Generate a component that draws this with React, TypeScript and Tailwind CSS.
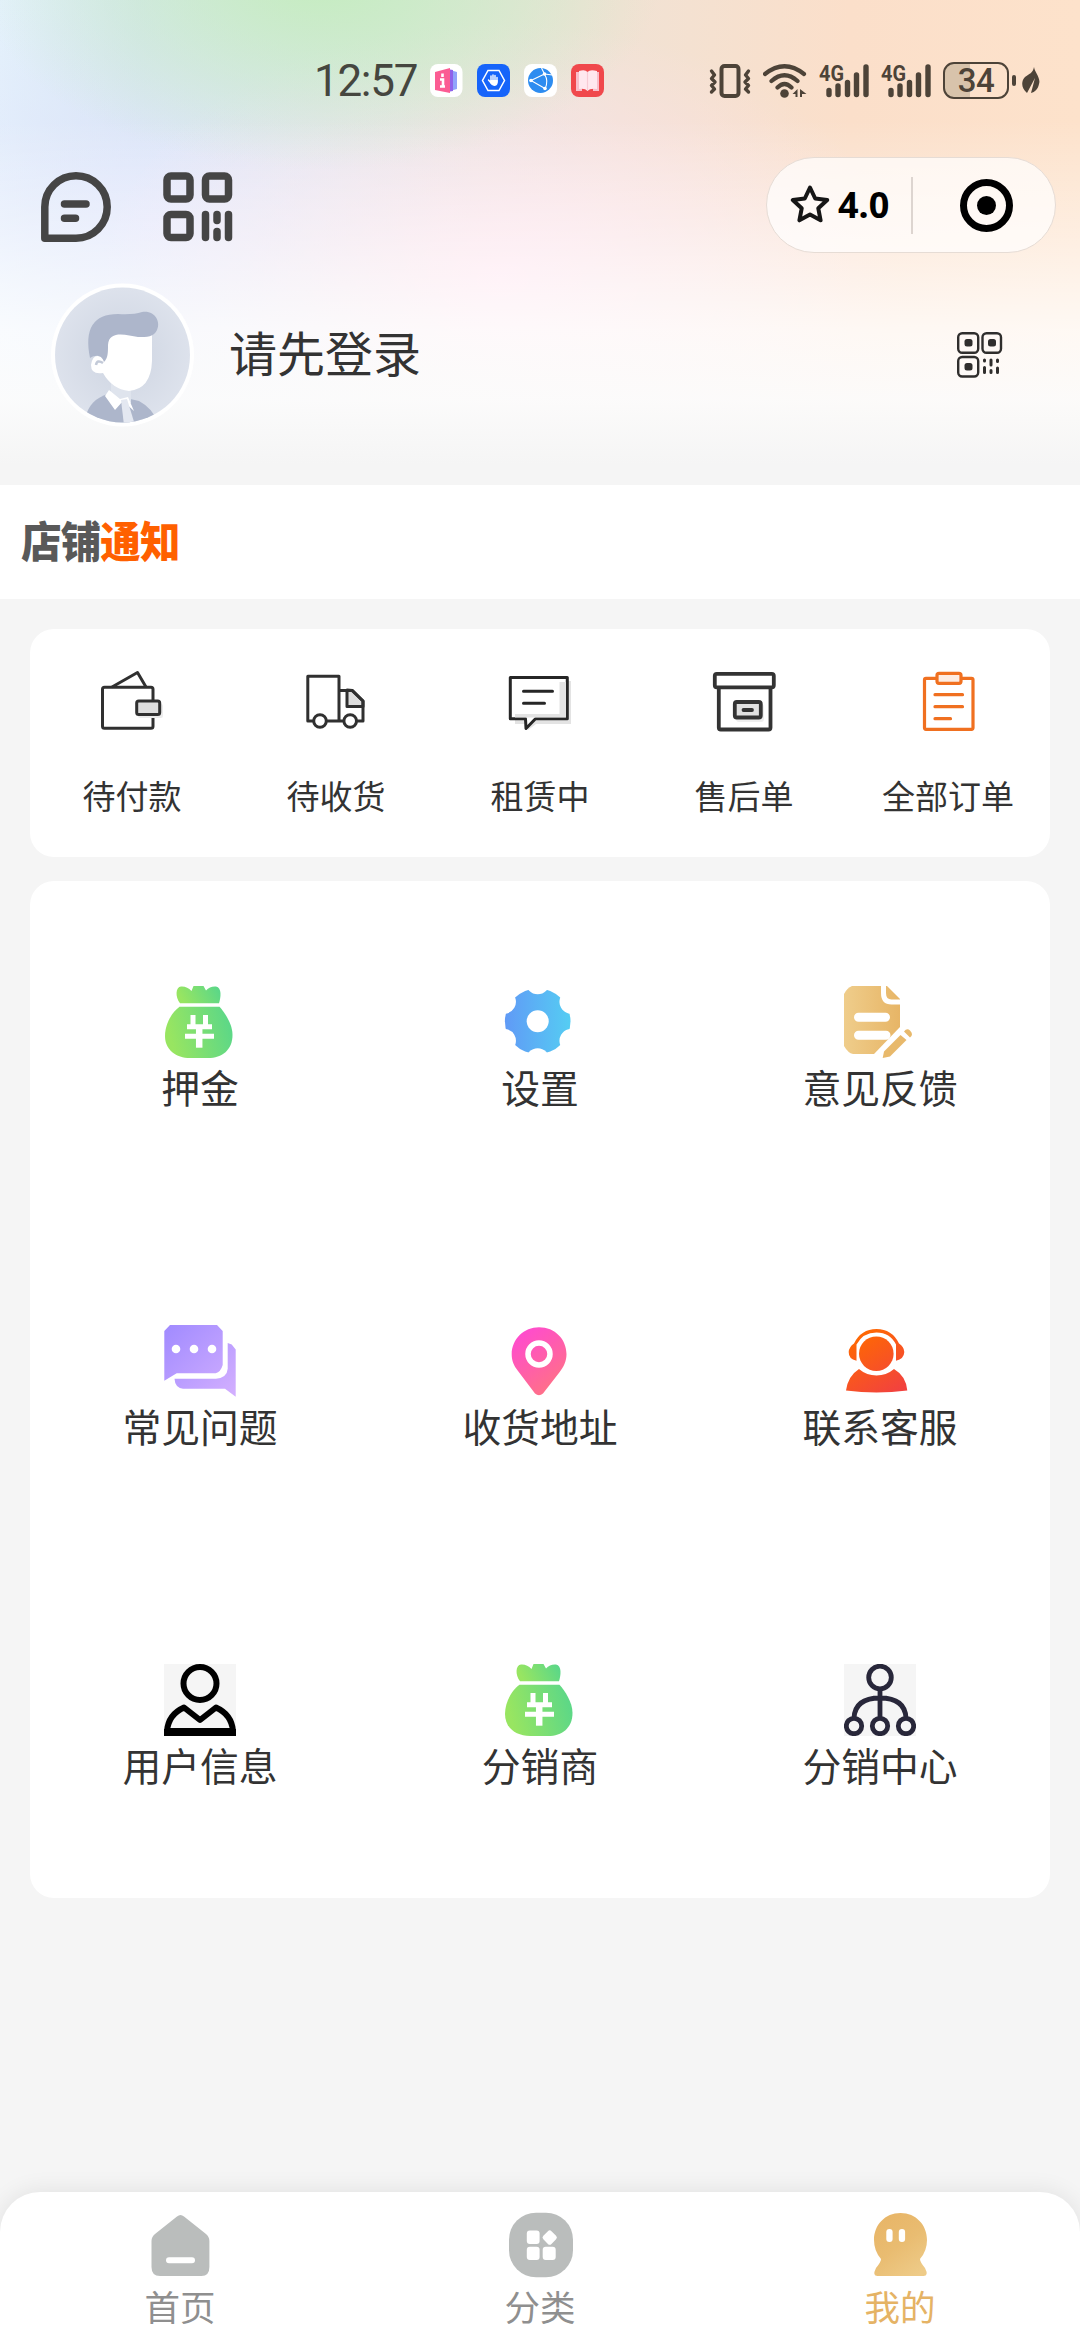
import React from 'react';

type IconProps = { className?: string };

type MenuItem = {
    label: string;
    icon: React.ReactNode;
};

// Shared gradients, referenced by the icons below
const Gradients: React.FC = () => (
    <svg className="absolute size-0" aria-hidden="true">
        <defs>
            <linearGradient id="green" x1="0" y1="0.2" x2="1" y2="0">
                <stop offset="0" stopColor="#98e561" />
                <stop offset="1" stopColor="#56d68b" />
            </linearGradient>
            <linearGradient id="blue">
                <stop offset="0" stopColor="#609af6" />
                <stop offset="1" stopColor="#55cdf3" />
            </linearGradient>
            <linearGradient id="gold">
                <stop offset="0" stopColor="#efcd8b" />
                <stop offset="1" stopColor="#e7b566" />
            </linearGradient>
            <linearGradient id="purple" gradientUnits="userSpaceOnUse" x1="0" y1="0" x2="72" y2="72">
                <stop offset="0" stopColor="#a08aff" />
                <stop offset="1" stopColor="#d4b0ff" />
            </linearGradient>
            <linearGradient id="pink" x1="0.1" y1="0" x2="0.7" y2="1">
                <stop offset="0" stopColor="#ff48d5" />
                <stop offset="1" stopColor="#ff7284" />
            </linearGradient>
            <linearGradient id="orange" gradientUnits="userSpaceOnUse" x1="12" y1="8" x2="50" y2="68">
                <stop offset="0" stopColor="#ff6a00" />
                <stop offset="1" stopColor="#f2423e" />
            </linearGradient>
            <linearGradient id="mine" x1="0.2" y1="0" x2="0.8" y2="1">
                <stop offset="0" stopColor="#e8b567" />
                <stop offset="0.5" stopColor="#e9bc71" />
                <stop offset="1" stopColor="#eecb88" />
            </linearGradient>
            <radialGradient id="avatar">
                <stop offset="0" stopColor="#cdd4e1" />
                <stop offset="1" stopColor="#dde2ec" />
            </radialGradient>
            <clipPath id="avatarClip">
                <circle cx="71.5" cy="72" r="67.5" />
            </clipPath>
        </defs>
    </svg>
);

const VibrateIcon = () => (
    <svg width="42" height="34" viewBox="0 0 42 34" fill="none" stroke="#4d4338" strokeLinejoin="round" strokeLinecap="round">
        <rect x="12.5" y="2" width="17" height="30" rx="3" strokeWidth="4" />
        <path d="M2.500 7l3 4-3 3.500 3.500 3.500-3.500 3.500 3 3.500-3 3M39.500 7l-3 4 3 3.500-3.500 3.500 3.500 3.500-3 3.500 3 3" strokeWidth="3.400" />
    </svg>
);

const WifiIcon = () => (
    <svg width="44" height="34" viewBox="0 0 44 34" fill="none" stroke="#4d4338" strokeWidth="4.200" strokeLinecap="round">
        <path d="M2 10Q21.500-5.500 41 10M8.500 17Q21.500 5.500 34.500 17M14.500 23.500Q21.500 16.500 28.500 23.500" />
        <circle cx="21.500" cy="29.500" r="4.300" fill="#4d4338" stroke="none" />
        <path d="M34.500 25v8h-2v-3h-3zM37 25l6.500 5H39v3h-2z" fill="#4d4338" stroke="none" />
    </svg>
);

const SignalIcon = () => (
    <svg width="50" height="54" viewBox="0 -10 50 54">
        <text x="0" y="16.500" fontSize="22.500" fontWeight="700" fill="#4d4338" textLength="25" lengthAdjust="spacingAndGlyphs">4G</text>
        <path d="M10 26.500v4M19 22v8.500M28.500 18.500v12M37.500 11v19.500M47 3v27.500" stroke="#4d4338" strokeWidth="5.400" strokeLinecap="round" />
    </svg>
);

const LeafIcon = () => (
    <svg width="18" height="30" viewBox="0 0 18 30" fill="#4d4338">
        <path d="M12 1c1 6 7 11 5 17-1 5-4 8-8 9l4-15L5 27C-1 22-1 15 3 11c4-3 8-4 9-10z" />
    </svg>
);

const Battery = () => (
    <div className="flex items-center">
        <div className="flex h-[37px] w-[66px] items-center justify-center rounded-[11px] border-[2.5px] border-[#4d4338] bg-linear-to-r from-[#d8c3ab] from-40% to-transparent to-40%">
            <span className="text-[33px] leading-none font-medium tracking-[-0.5px] text-[#4d4338]">34</span>
        </div>
        <div className="ml-[3px] h-[11px] w-1 rounded-full bg-[#4d4338]" />
    </div>
);

const AppIcons = () => (
    <div className="flex gap-[14px]">
        <svg width="33" height="33" viewBox="0 0 33 33">
            <rect width="32.500" height="33" rx="8" fill="#fff" />
            <path d="M20 6l7 2v17l-7 2z" fill="#90a4fb" />
            <path d="M17 5l6 1v21l-6 1z" fill="#8f62ea" />
            <path d="M5 8l15-4v25L5 26z" fill="#fb5c93" />
            <path d="M12.500 9.500v3.500M10 15.500h3v7M10 22.500h5" stroke="#fff" strokeWidth="2.600" fill="none" />
        </svg>
        <svg width="33" height="33" viewBox="0 0 33 33">
            <rect width="33" height="33" rx="8" fill="#1664fa" />
            <path d="M11 6.500h11L27.500 16.500 22 26.500H11L5.500 16.500z" fill="none" stroke="#fff" strokeWidth="1.500" />
            <path d="M14 17v-5M16 17v-6M18 17v-5.500M20 18v-4.500M11.500 16l3 3.500" stroke="#fff" strokeWidth="1.400" strokeLinecap="round" />
            <path d="M13.300 16h7.400v3q-.5 3-3.500 3-2.500 0-4-3z" fill="#fff" />
        </svg>
        <svg width="33" height="33" viewBox="0 0 33 33">
            <rect width="33" height="33" rx="8" fill="#fff" />
            <circle cx="16.500" cy="16.500" r="12.500" fill="#2d8cf0" />
            <path d="M7 16.500L20.500 10M7 16.500l14 8M20.500 10c3 5 3 10 .500 15M20.500 10l-3-6M20.500 10l8 1" fill="none" stroke="#fff" strokeWidth="1.100" />
            <circle cx="7" cy="16.500" r="1.800" fill="#fff" />
            <circle cx="20.500" cy="10" r="1.800" fill="#fff" />
            <circle cx="21" cy="24.500" r="1.800" fill="#fff" />
        </svg>
        <svg width="33" height="33" viewBox="0 0 33 33">
            <rect width="33" height="33" rx="8" fill="#f0484c" />
            <path d="M5 8h6v19H5zM22 8h6v19h-6z" fill="#f9bfcb" />
            <path d="M8 7q6-2 8.500 1Q19 5 26 7v18q-7-1-9.500 2-2.500-3-8.500-2z" fill="#ffe8ef" />
            <path d="M16.500 8v18" stroke="#f7cbd5" strokeWidth="1.200" />
        </svg>
    </div>
);

const MessageIcon = ({ className }: IconProps) => (
    <svg className={className} width="70" height="70" viewBox="0 0 70 70" fill="none" stroke="#454545" strokeWidth="7.500" strokeLinecap="round" strokeLinejoin="round">
        <path d="M3.800 66.200V35A31.200 31.200 0 1 1 35 66.200z" />
        <path d="M23.500 32h21.500M23.500 46.300h11" />
    </svg>
);

const ScanIcon = ({ className }: IconProps) => (
    <svg className={className} width="70" height="70" viewBox="0 0 70 70" fill="none" stroke="#454545" strokeWidth="7.500" strokeLinecap="round">
        <rect x="4" y="4" width="23" height="23" rx="4" />
        <rect x="42.500" y="4" width="23" height="23" rx="4" />
        <rect x="4" y="42.500" width="23" height="23" rx="4" />
        <path d="M42.500 42.500v23M65.500 42.500v23M54 42.500v6M54 59.500v6" />
    </svg>
);

const QrIcon = () => (
    <svg width="46" height="46" viewBox="0 0 46 46" fill="none" stroke="#2f2e2d" strokeWidth="2.400" strokeLinecap="round">
        <rect x="1.200" y="1.200" width="20" height="19.500" rx="4" />
        <rect x="25.500" y="1.200" width="18.500" height="19.500" rx="4" />
        <rect x="1.200" y="25" width="20" height="19.500" rx="4" />
        <g fill="#2f2e2d" stroke="none">
            <rect x="7.500" y="7" width="8" height="7.500" rx="2.500" />
            <rect x="31" y="7" width="8" height="7.500" rx="2.500" />
            <rect x="7.500" y="31" width="8" height="7.500" rx="2.500" />
        </g>
        <path d="M27.500 28v1M27.500 35.500v5M34 28v5M34 38.500v2M40.500 28v1.500M40.500 36v4.500" strokeWidth="3" />
    </svg>
);

const Avatar = () => (
    <svg width="143" height="144" viewBox="0 0 143 144">
        <circle cx="71.500" cy="72" r="71.500" fill="#fff" />
        <circle cx="71.500" cy="72" r="67.500" fill="url(#avatar)" />
        <g clipPath="url(#avatarClip)">
            <path d="M34 135q5-19 23-24l18 4 13 3q13 7 18 20v8H34z" fill="#adb6cb" />
            <path d="M60 100h20v20H60z" fill="#dfe4ed" />
            <path d="M58 107l11 9 8-2 6 14-11-10-8 9-10-14z" fill="#fff" />
            <path d="M70 117l6-1 8 26h-11z" fill="#e4e8f1" />
            <path d="M55 50q23-8 46 1v27q-1 28-23 30-17-2-26-18-12 2-12-8 2-13 12-7z" fill="#fff" />
            <path d="M45 82q1-6 7-2" fill="none" stroke="#c3cad8" strokeWidth="2.500" />
            <path d="M39 75Q30 31 67 31q15 1 24-2c13-2 19 10 15 18-3 7-10 7-19 7-12-2-29-7-30 8 0 8 0 13-4 17-2-7-8-8-14-4z" fill="#adb6cb" />
        </g>
    </svg>
);

const StarIcon = () => (
    <svg width="40" height="40" viewBox="0 0 40 40" fill="none" stroke="#161616" strokeWidth="4" strokeLinejoin="round">
        <path d="M20 2.500l5.200 11 12 1.500-8.900 8.300 2.300 12L20 29.500 9.400 35.300l2.300-12L2.800 15l12-1.500z" />
    </svg>
);

const WalletIcon = () => (
    <svg width="72" height="72" viewBox="0 0 72 72" fill="none" stroke="#303030" strokeWidth="3" strokeLinejoin="round">
        <path d="M16 22L41.500 7.500 50 22" />
        <rect x="6.500" y="22.300" width="50.500" height="41" rx="2" />
        <rect x="42" y="39" width="25" height="14" rx="2" fill="#ececec" stroke="none" />
        <rect x="40.700" y="36" width="23" height="13.500" rx="2" fill="#dedede" />
    </svg>
);

const TruckIcon = () => (
    <svg width="72" height="72" viewBox="0 0 72 72" fill="none" stroke="#303030" strokeWidth="3" strokeLinejoin="round">
        <path d="M47 25l5.500.5L63 36v5.500H47z" fill="#dedede" />
        <path d="M39 25.500h13L63 36v20H7.800V11.300H39V56" />
        <circle cx="20" cy="56" r="6.300" fill="#fff" />
        <circle cx="50.200" cy="56" r="6.300" fill="#fff" />
    </svg>
);

const LeaseIcon = () => (
    <svg width="72" height="72" viewBox="0 0 72 72" fill="none" stroke="#262626" strokeWidth="3" strokeLinejoin="round">
        <path d="M64 16h3v43H32l-8 6v-6H11v-5h53z" fill="#e3e3e3" stroke="none" />
        <path d="M6.300 12.500h57v41.300H31.500L22 63.500l-.5-9.700H6.300z" fill="#fff" />
        <path d="M55.500 17H62v35.500H11V49h44.500z" fill="#e3e3e3" stroke="none" />
        <path d="M19.500 26.300h29M19.500 38.300h21" strokeLinecap="round" />
    </svg>
);

const ArchiveIcon = () => (
    <svg width="72" height="72" viewBox="0 0 72 72" fill="none" stroke="#333" strokeWidth="3.800" strokeLinejoin="round" strokeLinecap="round">
        <path d="M10.800 24v38.500q0 2 2 2h47.700q2 0 2-2V24" />
        <rect x="6.800" y="8.800" width="59" height="13.500" rx="2" />
        <rect x="28" y="39" width="28" height="18" rx="3" fill="#eee" stroke="none" />
        <rect x="26.800" y="37" width="26" height="15.500" rx="2" fill="#e0e0e0" />
        <path d="M35.500 45h8.500" />
    </svg>
);

const ClipboardIcon = () => (
    <svg width="72" height="72" viewBox="0 0 72 72" fill="none" stroke="#f07020" strokeWidth="3.200" strokeLinejoin="round" strokeLinecap="round">
        <rect x="12.500" y="13.300" width="48.500" height="51" rx="1.500" />
        <rect x="25" y="8.300" width="24" height="10" rx="2" fill="#fdece2" />
        <path d="M23 29.700h27.500M23 41.700h27.500M23 53.700h15.500" />
    </svg>
);

const MoneyBagIcon = () => (
    <svg width="72" height="72" viewBox="0 0 72 72">
        <path d="M16 17.300C11 11 11.500 1 17 .5q6-.5 10.500 4.500L29.500 0h10L42 4.500Q46 0 52 .5c6 1 5 11 3 16.800z" fill="url(#green)" />
        <path d="M15.500 20.700H55.500C61 27 68.500 38 68.500 49 68.500 64 58 72 44 72H26C12 72 1 64 1 50 1 38 8 26 15.500 20.700z" fill="url(#green)" />
        <path d="M29 29v9.500M41.500 29v9.500M23 40.800h25M21 50.200h29" fill="none" stroke="#fff" strokeWidth="5" />
        <path d="M35.200 39v22.700" stroke="#fff" strokeWidth="6.500" />
    </svg>
);

const GearIcon = () => (
    <svg width="72" height="72" viewBox="0 0 72 72">
        <circle cx="33.700" cy="35.300" r="32.800" fill="url(#blue)" />
        <circle cx="33.700" cy="35.300" r="11" fill="#fff" />
        {[0, 60, 120, 180, 240, 300].map(angle => (
            <circle key={angle} cx="33.700" cy="-3.700" r="12" fill="#fff" transform={`rotate(${angle} 33.7 35.3)`} />
        ))}
    </svg>
);

const FeedbackIcon = () => (
    <svg width="72" height="72" viewBox="0 0 72 72">
        <path d="M8 0h35l13 13v28L30 68H9Q4 67 0 60V8Q3 2 8 0z" fill="url(#gold)" />
        <path d="M39.500-2v9q0 9 8 9H58" fill="none" stroke="#fff" strokeWidth="5" />
        <path d="M14.500 31.300h27M14.500 49.300H42" stroke="#fff" strokeWidth="9" strokeLinecap="round" />
        <path d="M56.500 49l6 5L46 70.500 38.700 72 40 65.500zM60 45.500q3-4 6-1 4 4 0 7z" fill="#e8b96b" />
    </svg>
);

const FaqIcon = () => (
    <svg width="72" height="72" viewBox="0 0 72 72">
        <path d="M6 0h47l5.700 6v34q-2 7-7 8.300h-39L.3 55.700V6z" fill="url(#purple)" />
        <path d="M63.700 18l4 1.500 4 5v47.200L61 63.700H19q-8-1-8.500-10H52q11-1 11.700-10z" fill="url(#purple)" />
        <g fill="#fff">
            <circle cx="12" cy="24" r="4.300" />
            <circle cx="30" cy="24" r="4.300" />
            <circle cx="48" cy="24" r="4.300" />
        </g>
    </svg>
);

const PinIcon = () => (
    <svg width="72" height="72" viewBox="0 0 72 72">
        <path d="M35 2.300c16 0 27.500 12 27.500 27 0 7-3 13-7 18L39 68.500q-4 3.500-8 0L14 46C10 41 7.700 36 7.700 29.500 7.700 14 20 2.300 35 2.300z" fill="url(#pink)" />
        <circle cx="35" cy="29" r="11" fill="none" stroke="#fff" strokeWidth="5.500" />
    </svg>
);

const ServiceIcon = () => (
    <svg width="72" height="72" viewBox="0 0 72 72" fill="url(#orange)">
        <circle cx="32.300" cy="28.700" r="17.300" />
        <path d="M12.500 19.500v16.200Q4.500 34 4.700 27 5 22 10 18.500 17 4 32.500 4T55 18.500q5 3 5.300 8.500Q60 34 52 35.700V19.500Q46 7.500 32.500 7.500t-20 12z" />
        <path d="M15 44q7.500 6.500 17.500 6.500T50 44q12 7 13.300 21.500-31 4-61.300 0Q4 51 15 44z" />
    </svg>
);

const UserInfoIcon = () => (
    <svg className="bg-[#f5f5f5]" width="72" height="72" viewBox="0 0 72 72" fill="none" stroke="#000" strokeWidth="6">
        <circle cx="36" cy="19.500" r="16.500" />
        <path d="M3 67C4 55 10 48 20 43.500L36 56l16-12.500C62 48 68 55 69 67z" strokeLinejoin="round" />
        <path d="M0 68.500h72" strokeWidth="7" />
    </svg>
);

const NetworkIcon = () => (
    <svg className="bg-[#f5f5f5]" width="72" height="72" viewBox="0 0 72 72" fill="none" stroke="#28273a" strokeWidth="4.800">
        <circle cx="36" cy="13.500" r="11.300" />
        <path d="M36 25v28M10 54Q11 34 36 34t26 20" />
        <circle cx="10" cy="62" r="7.700" />
        <circle cx="36" cy="62" r="7.700" />
        <circle cx="62" cy="62" r="7.700" />
    </svg>
);

const HomeIcon = () => (
    <svg width="72" height="72" viewBox="0 0 72 72">
        <path d="M33 7.500q3.500-3 7 0L62 25q3.400 3 3.400 7v26q0 9-8 9H16q-8.500 0-8.500-9V32q0-4 3.500-7z" fill="#babdbc" />
        <rect x="22" y="48.300" width="29" height="6" rx="3" fill="#fff" />
    </svg>
);

const CategoryIcon = () => (
    <svg width="72" height="72" viewBox="0 0 72 72">
        <rect x="5" y="3.700" width="64" height="64.500" rx="27" fill="#babdbc" />
        <g fill="#fff">
            <rect x="22.800" y="21.500" width="12.800" height="13.500" rx="3" />
            <rect x="22.800" y="37.700" width="12.800" height="13.200" rx="3" />
            <rect x="38.700" y="37.700" width="13" height="13.200" rx="3" />
            <rect x="40" y="22.800" width="11.500" height="11.500" rx="2.500" transform="rotate(45 45.7 28.5)" />
        </g>
    </svg>
);

const MineIcon = () => (
    <svg width="72" height="72" viewBox="0 0 72 72">
        <path d="M36.500 4C52 4 63 16 63 31q0 11-7 19 0 3 5 9 4 8-1.500 8h-46Q8 67 12 59q5-6 5-9-7-8-7-19C10 16 21 4 36.500 4z" fill="url(#mine)" />
        <rect x="22.300" y="20" width="6.300" height="13" rx="3" fill="#fff" />
        <rect x="34.800" y="20" width="6.300" height="13" rx="3" fill="#fff" />
    </svg>
);

const orders: MenuItem[] = [
    { label: '待付款', icon: <WalletIcon /> },
    { label: '待收货', icon: <TruckIcon /> },
    { label: '租赁中', icon: <LeaseIcon /> },
    { label: '售后单', icon: <ArchiveIcon /> },
    { label: '全部订单', icon: <ClipboardIcon /> },
];

const services: MenuItem[] = [
    { label: '押金', icon: <MoneyBagIcon /> },
    { label: '设置', icon: <GearIcon /> },
    { label: '意见反馈', icon: <FeedbackIcon /> },
    { label: '常见问题', icon: <FaqIcon /> },
    { label: '收货地址', icon: <PinIcon /> },
    { label: '联系客服', icon: <ServiceIcon /> },
    { label: '用户信息', icon: <UserInfoIcon /> },
    { label: '分销商', icon: <MoneyBagIcon /> },
    { label: '分销中心', icon: <NetworkIcon /> },
];

const StatusBar: React.FC = () => (
    <div className="flex h-[157px] items-center pt-1 pl-[314px] font-[Roboto,sans-serif]">
        <span className="w-[116px] text-[44px] leading-none tracking-[-1.3px] text-[#45463f]">12:57</span>
        <AppIcons />
        <div className="ml-[105px] flex items-center gap-3">
            <VibrateIcon />
            <WifiIcon />
            <SignalIcon />
            <SignalIcon />
            <div className="flex items-center gap-1.5">
                <Battery />
                <LeafIcon />
            </div>
        </div>
    </div>
);

const Header: React.FC = () => (
    <header className="h-[485px] bg-[linear-gradient(to_bottom,transparent_120px,#ffffff70_240px,#ffffffc8_330px,#fcfcfcf2_400px,#f5f5f5_465px),radial-gradient(ellipse_340px_190px_at_320px_-20px,#c5ecc0,#c5ecc000),radial-gradient(ellipse_400px_260px_at_500px_280px,#ffe2ee,#ffe2ee00),radial-gradient(ellipse_330px_260px_at_150px_220px,#e0e5fc,#e0e5fc00),linear-gradient(to_right,#e4f2fb_0px,#d6e7f1_140px,#dfe8e1_400px,#f1e2d4_620px,#fbdfca_850px,#fde2cb_1080px)]">
        <StatusBar />
        <div className="flex h-24 items-center justify-between pr-6 pl-[41px]">
            <div className="flex gap-[52px] pt-1">
                <MessageIcon />
                <ScanIcon />
            </div>
            <div className="flex h-24 w-[290px] items-center rounded-full border-[1.5px] border-[#e6dcd5] bg-white/70 pl-[23px]">
                <StarIcon />
                <span className="ml-[8px] w-[73px] font-['Noto_Sans',sans-serif] text-[36px] leading-none font-bold text-black">4.0</span>
                <div className="h-[57px] w-[1.5px] bg-[#ddd5d0]" />
                <div className="ml-[47px] flex size-[53px] items-center justify-center rounded-full border-[7px] border-black">
                    <div className="size-[19px] rounded-full bg-black" />
                </div>
            </div>
        </div>
        <div className="mt-[30px] flex h-36 items-center pr-[77px] pl-[51px]">
            <Avatar />
            <span className="ml-[35px] flex-1 pb-[9px] text-[48px] leading-none text-[#333]">请先登录</span>
            <QrIcon />
        </div>
    </header>
);

const TabBar: React.FC = () => (
    <nav className="grid h-[148px] grid-cols-3 rounded-t-[40px] bg-white pt-[17px] text-[35.500px] leading-[49px] text-[#8f8f8f] shadow-[0_0_24px_rgba(0,0,0,0.09)]">
        <div className="flex flex-col items-center">
            <HomeIcon />
            <span>首页</span>
        </div>
        <div className="flex flex-col items-center">
            <CategoryIcon />
            <span>分类</span>
        </div>
        <div className="flex flex-col items-center text-[#e5b365]">
            <MineIcon />
            <span>我的</span>
        </div>
    </nav>
);

const App: React.FC = () => {
    return (
        <div className="flex h-[2340px] w-[1080px] flex-col overflow-hidden bg-[#f5f5f5] font-['Noto_Sans_CJK_SC',sans-serif] text-[#333]">
            <Gradients />
            <Header />

            <div className="flex h-[114px] items-center bg-white pb-[5px] pl-[21px]">
                <div className="flex origin-left scale-x-[0.94] text-[43px] leading-none font-black tracking-[-0.8px]">
                    <span className="text-[#595959]">店铺</span>
                    <span className="text-[#ff6000]">通知</span>
                </div>
            </div>

            <section className="mx-[30px] mt-[30px] grid h-[228px] grid-cols-5 rounded-3xl bg-white pt-9">
                {orders.map(item => (
                    <div key={item.label} className="flex flex-col items-center">
                        {item.icon}
                        <span className="mt-[33px] text-[33px] leading-[50px]">{item.label}</span>
                    </div>
                ))}
            </section>

            <section className="mx-[30px] mt-6 grid grid-cols-3 rounded-3xl bg-white">
                {services.map(item => (
                    <div key={item.label} className="flex h-[339px] flex-col items-center justify-center">
                        {item.icon}
                        <span className="text-[38.800px] leading-[57px]">{item.label}</span>
                    </div>
                ))}
            </section>

            <div className="mt-auto">
                <TabBar />
            </div>
        </div>
    );
};

export default App;
